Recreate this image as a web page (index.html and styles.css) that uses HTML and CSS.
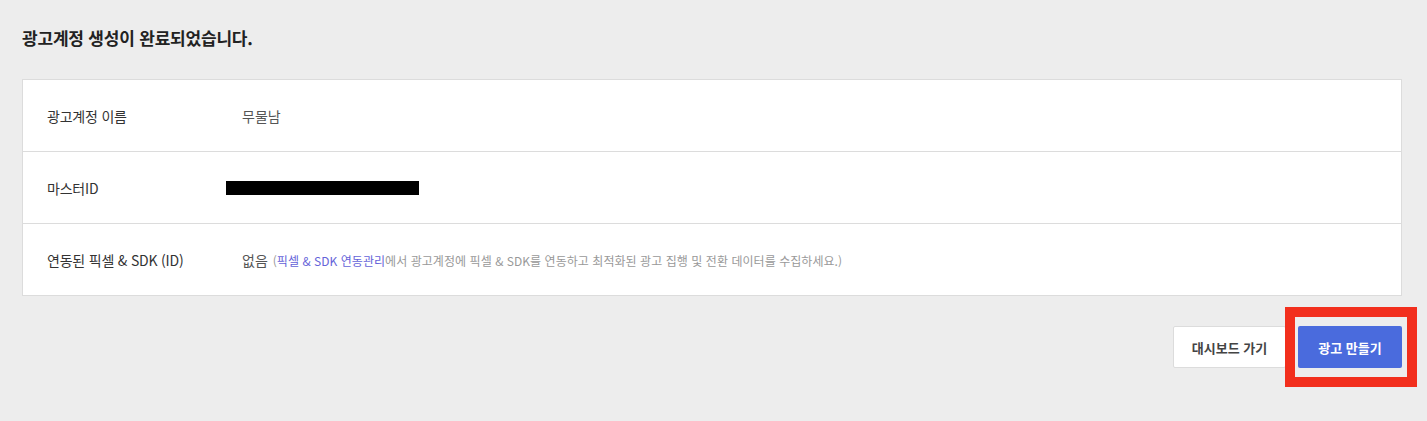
FILE: index.html
```html
<!DOCTYPE html>
<html lang="ko">
<head>
    <meta charset="UTF-8">
    <meta name="viewport" content="width=device-width, initial-scale=1.0">
    <title>광고계정 생성 완료</title>
    <link rel="stylesheet" href="styles.css">
</head>
<body>
    <div class="page">
        <!-- Title -->
        <h1 class="page-title">광고계정 생성이 완료되었습니다.</h1>

        <!-- Account summary -->
        <div class="summary">
            <div class="summary-row">
                <div class="summary-label">광고계정 이름</div>
                <div class="summary-value">무물남</div>
            </div>
            <div class="summary-row">
                <div class="summary-label">마스터ID</div>
                <div class="summary-value summary-value-masked">
                    <span class="mask"></span>
                </div>
            </div>
            <div class="summary-row">
                <div class="summary-label">연동된 픽셀 &amp; SDK (ID)</div>
                <div class="summary-value">
                    없음
                    <span class="summary-note">(<a href="#" class="note-link">픽셀 &amp; SDK 연동관리</a>에서 광고계정에 픽셀 &amp; SDK를 연동하고 최적화된 광고 집행 및 전환 데이터를 수집하세요.)</span>
                </div>
            </div>
        </div>

        <!-- Actions -->
        <div class="actions">
            <button class="btn btn-default">대시보드 가기</button>
            <div class="btn-wrap">
                <button class="btn btn-primary">광고 만들기</button>
                <span class="highlight"></span>
            </div>
        </div>
    </div>
</body>
</html>
```

FILE: styles.css
```css
/* Base styles */
* {
    margin: 0;
    padding: 0;
    box-sizing: border-box;
}

html,
body {
    min-height: 100%;
}

body {
    font-family: "Noto Sans CJK KR", "Noto Sans", sans-serif;
    background-color: #ededed;
    color: #333;
    font-size: 14px;
}

.page {
    min-height: 100vh;
    padding: 0 25px 60px 22px;
}

/* Title */
.page-title {
    padding-top: 26px;
    font-size: 17px;
    font-weight: bold;
    line-height: 24px;
    color: #222;
    letter-spacing: -0.2px;
}

/* Summary */
.summary {
    margin-top: 29px;
    background-color: #fff;
    border: 1px solid #dcdcdc;
}

.summary-row {
    display: flex;
    align-items: center;
    height: 72px;
    padding-left: 24px;
    border-top: 1px solid #dcdcdc;
}

.summary-row:first-child {
    height: 71px;
    border-top: none;
}

.summary-label {
    width: 195px;
    flex-shrink: 0;
    color: #333;
    letter-spacing: -0.2px;
}

.summary-value {
    color: #555;
}

.summary-value-masked {
    margin-left: -16px;
}

.mask {
    display: block;
    width: 193px;
    height: 14px;
    background-color: #000;
}

.summary-note {
    margin-left: 1px;
    font-size: 12px;
    color: #999;
    letter-spacing: 0.05px;
}

.note-link {
    color: #6563d9;
    text-decoration: none;
}

/* Actions */
.actions {
    display: flex;
    justify-content: flex-end;
    gap: 12px;
    margin-top: 30px;
}

.btn {
    height: 42px;
    font-family: inherit;
    font-size: 13px;
    font-weight: bold;
    border-radius: 2px;
    cursor: pointer;
}

.btn-default {
    width: 113px;
    background-color: #fff;
    color: #444;
    border: 1px solid #dcdcdc;
}

.btn-primary {
    width: 104px;
    background-color: #4a6bdd;
    color: #fff;
    border: none;
}

.btn-wrap {
    position: relative;
    display: flex;
}

/* Highlight frame over the primary button */
.highlight {
    position: absolute;
    top: -19px;
    left: -13px;
    right: -15px;
    bottom: -19px;
    border: 10px solid #f22f1d;
    pointer-events: none;
}
```
